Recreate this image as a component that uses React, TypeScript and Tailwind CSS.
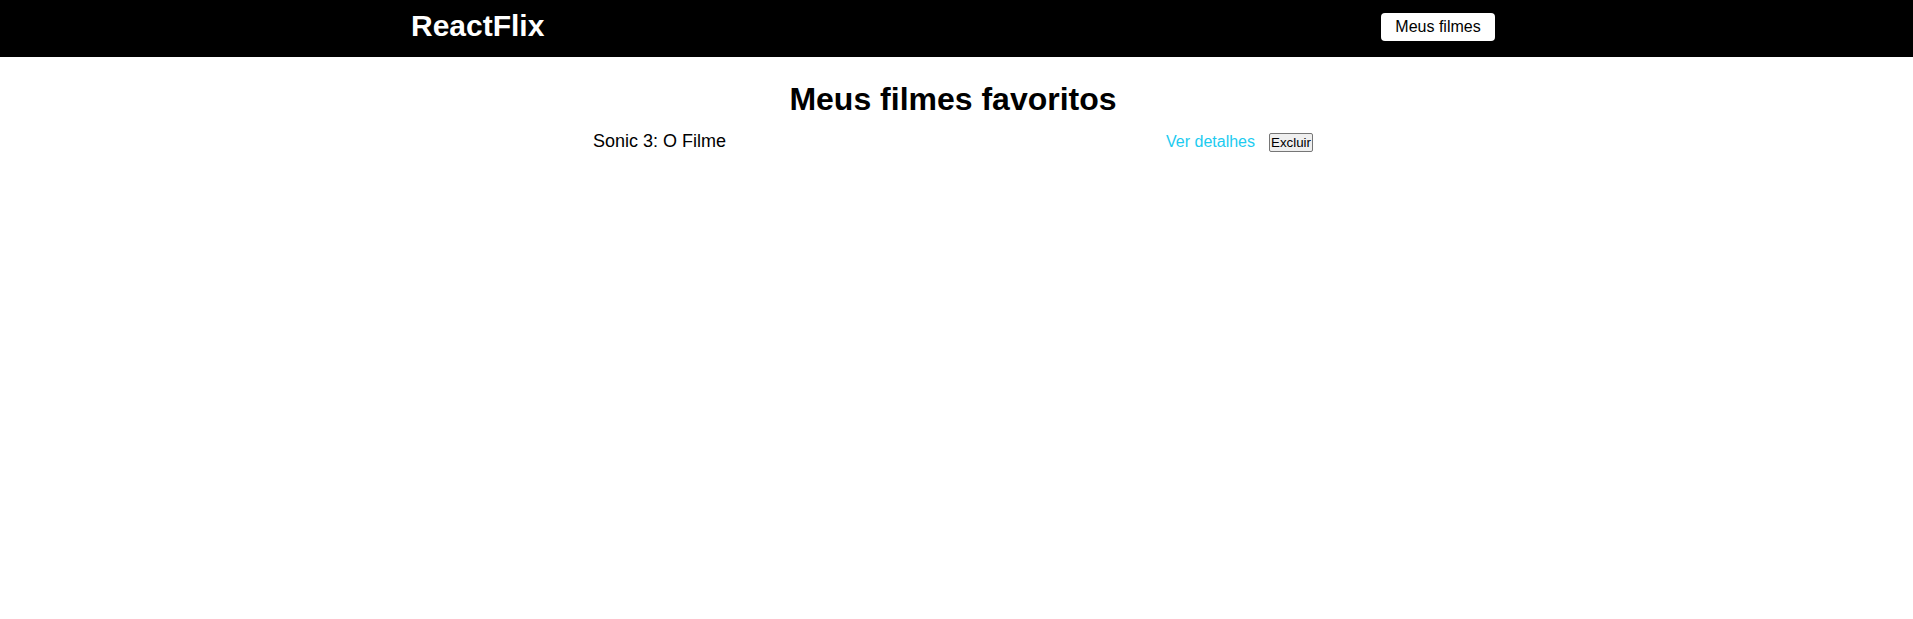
import React from "react";

export default function App() {
  return (
    <div className="min-h-screen bg-white text-black" style={{ fontFamily: '"Liberation Sans", Arial, sans-serif' }}>
      <header className="h-[57px] bg-black pr-[7px]">
        <div className="mx-auto flex w-[1084px] items-start justify-between">
          <h1 className="mt-[11px] text-[30px] font-bold leading-[30px] text-white">ReactFlix</h1>
          <button className="mt-[13px] h-[28px] w-[114px] rounded-[4px] bg-white text-[16px] leading-[18px] text-black">
            Meus filmes
          </button>
        </div>
      </header>
      <main className="pr-[7px]">
        <h2 className="mt-[26px] text-center text-[32px] font-bold leading-[32px]">Meus filmes favoritos</h2>
        <ul className="mx-auto mt-[18px] w-[720px]">
          <li className="flex items-start justify-between">
            <span className="-mt-px text-[18px] leading-[18px]">Sonic 3: O Filme</span>
            <div className="flex items-start gap-[14px]">
              <a href="#" className="mt-[1px] text-[16px] leading-[16px] text-[#1ccbf0]">Ver detalhes</a>
              <button className="flex h-[19px] w-[44px] items-center justify-center rounded-[2px] border border-[#767676] bg-[#efefef] p-0 text-[13.33px] leading-[15px] text-black">
                Excluir
              </button>
            </div>
          </li>
        </ul>
      </main>
    </div>
  );
}
